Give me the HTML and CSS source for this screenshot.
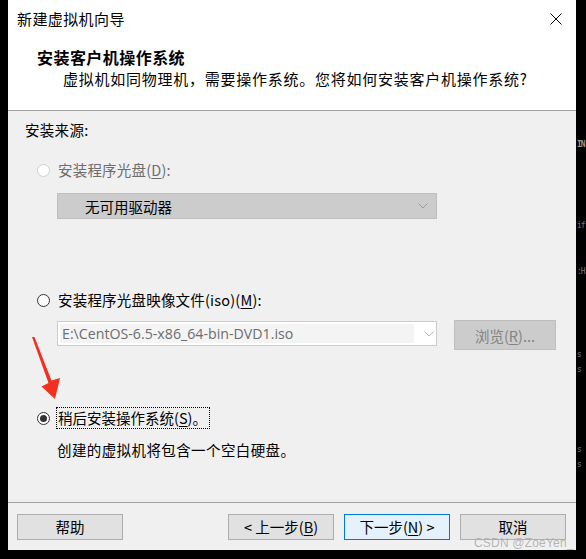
FILE: index.html
```html
<!DOCTYPE html>
<html lang="zh-CN">
<head>
<meta charset="utf-8">
<title>新建虚拟机向导</title>
<link rel="stylesheet" href="styles.css">
</head>
<body>
<div class="screen">
  <div class="dialog">
    <div class="top">
      <div class="titlebar">
        <span class="title">新建虚拟机向导</span>
        <svg class="close" width="12" height="12" viewBox="0 0 12 12"><path d="M0.5 0.5 L11.5 11.5 M11.5 0.5 L0.5 11.5" stroke="#000" stroke-width="1" fill="none"/></svg>
      </div>
      <div class="hdr-title">安装客户机操作系统</div>
      <div class="hdr-sub">虚拟机如同物理机，需要操作系统。您将如何安装客户机操作系统?</div>
    </div>
    <div class="content">
      <div class="label">安装来源:</div>
      <div class="radio-row r1 disabled">
        <span class="radio"></span>
        <span class="rtext">安装程序光盘(<u>D</u>):</span>
      </div>
      <div class="combo combo-dis">
        <span class="ctext">无可用驱动器</span>
        <svg class="chev" width="10" height="6" viewBox="0 0 10 6"><path d="M0.5 0.5 L5 5 L9.5 0.5" stroke="#9a9a9a" stroke-width="1" fill="none"/></svg>
      </div>
      <div class="radio-row r2">
        <span class="radio"></span>
        <span class="rtext">安装程序光盘映像文件(iso)(<u>M</u>):</span>
      </div>
      <div class="iso-row">
        <div class="combo combo-iso">
          <span class="field">E:\CentOS-6.5-x86_64-bin-DVD1.iso</span>
          <svg class="chev" width="10" height="6" viewBox="0 0 10 6"><path d="M0.5 0.5 L5 5 L9.5 0.5" stroke="#b4b4b4" stroke-width="1" fill="none"/></svg>
        </div>
        <div class="btn-dis">浏览(<u>R</u>)...</div>
      </div>
      <div class="radio-row r3">
        <span class="radio checked"></span>
        <span class="rtext focus">稍后安装操作系统(<u>S</u>)。</span>
      </div>
      <div class="desc">创建的虚拟机将包含一个空白硬盘。</div>
    </div>
    <div class="footer">
      <div class="btn">帮助</div>
      <div class="spacer"></div>
      <div class="btn">&lt; 上一步(<u>B</u>)</div>
      <div class="btn primary">下一步(<u>N</u>) &gt;</div>
      <div class="btn">取消</div>
    </div>
  </div>
  <svg class="arrow" width="586" height="559" viewBox="0 0 586 559"><polygon points="32,337 34.5,337 51.5,380.5 60,378 55,399 41.5,386.5 48.5,383" fill="#f2301f"/></svg>
  <div class="watermark">CSDN @ZoeYen_</div>
  <div class="behind">
    <span class="frag f1">IN</span>
    <span class="frag f2">if</span>
    <span class="frag f3">:H</span>
    <span class="frag f4">s</span>
    <span class="frag f5">s</span>
    <span class="frag f6">s</span>
    <span class="frag f7">s</span>
  </div>
</div>
</body>
</html>
```

FILE: styles.css
```css
* { box-sizing: border-box; }
html, body { margin: 0; padding: 0; background: #000; }
body {
  font-family: "Noto Sans CJK SC", "Noto Sans", sans-serif;
  font-size: 14.5px;
  color: #000;
}
u { text-decoration: underline; text-underline-offset: 2px; }
.screen {
  position: relative;
  width: 586px;
  height: 559px;
  overflow: hidden;
  background: #000;
}
.dialog {
  margin-left: 8px;
  width: 568px;
  height: 550px;
  background: #f0f0f0;
  display: flex;
  flex-direction: column;
}
.top {
  background: #fff;
  height: 111px;
  border-bottom: 1px solid #a0a0a0;
}
.titlebar {
  height: 38px;
  display: flex;
  align-items: center;
  padding-left: 9px;
  padding-right: 14px;
}
.title { flex: 1; font-size: 15px; line-height: 20px; letter-spacing: 0.4px; }
.close { display: block; }
.hdr-title {
  margin-top: 9px;
  padding-left: 29px;
  font-weight: bold;
  font-size: 16px;
  line-height: 20px;
  letter-spacing: 0.45px;
}
.hdr-sub {
  margin-top: 2px;
  padding-left: 55px;
  font-size: 15px;
  line-height: 20px;
  letter-spacing: 0.75px;
}
.content {
  flex: 1;
  display: flex;
  flex-direction: column;
}
.label {
  margin-top: 9px;
  padding-left: 17px;
  line-height: 20px;
  height: 20px;
  letter-spacing: 0.3px;
}
.radio-row {
  display: flex;
  align-items: center;
  height: 20px;
  padding-left: 29px;
  line-height: 20px;
  letter-spacing: 0.2px;
}
.r1 { margin-top: 20px; }
.r2 { margin-top: 71px; }
.r3 { margin-top: 58px; }
.radio {
  width: 13px;
  height: 13px;
  border: 1px solid #333;
  border-radius: 50%;
  background: #fff;
  margin-right: 7px;
  position: relative;
  flex: none;
}
.disabled .radio { border-color: #cfcfcf; }
.disabled .rtext { color: #6d6d6d; }
.radio.checked::after {
  content: "";
  position: absolute;
  left: 2px; top: 2px;
  width: 7px; height: 7px;
  border-radius: 50%;
  background: #333;
}
.rtext { padding: 0 1px; }
.focus {
  outline: 1px dotted #000;
  outline-offset: 0;
  padding: 0 2px 0 1px;
  letter-spacing: 0;
}
.combo {
  display: flex;
  align-items: center;
  position: relative;
}
.combo-dis {
  margin-top: 13px;
  margin-left: 49px;
  width: 380px;
  height: 26px;
  background: #cccccc;
  border: 1px solid #bfbfbf;
  padding-left: 27px;
}
.ctext { flex: 1; }
.chev { display: block; margin-right: 8px; }
.iso-row {
  display: flex;
  margin-top: 10px;
  margin-left: 49px;
  height: 30px;
}
.combo-iso {
  margin-top: 1px;
  width: 380px;
  height: 25px;
  background: #fff;
  border: 1px solid #cccccc;
  padding: 2px;
}
.field {
  width: 354px;
  height: 19px;
  background: #f4f4f4;
  color: #6d6d6d;
  font-family: "Open Sans", "Noto Sans", sans-serif;
  font-size: 14.2px;
  line-height: 19px;
  padding-left: 2px;
  white-space: nowrap;
  overflow: hidden;
  margin-right: 10px;
}
.combo-iso .chev { margin-right: 0; }
.btn-dis {
  margin-left: 17px;
  width: 102px;
  height: 30px;
  background: #cccccc;
  border: 1px solid #bfbfbf;
  color: #838383;
  display: flex;
  align-items: center;
  justify-content: center;
}
.desc {
  margin-top: 12px;
  padding-left: 49px;
  line-height: 20px;
  letter-spacing: 0.4px;
}
.footer {
  height: 48px;
  border-top: 1px solid #a0a0a0;
  padding: 11px 10px 0 9px;
  display: flex;
  align-items: flex-start;
  gap: 10px;
}
.spacer { flex: 1; }
.btn {
  width: 106px;
  height: 26px;
  background: #e1e1e1;
  border: 1px solid #adadad;
  display: flex;
  align-items: center;
  justify-content: center;
  line-height: 20px;
}
.btn.primary {
  background: #e5f1fb;
  border-color: #0078d7;
}
.arrow {
  position: absolute;
  left: 0; top: 0;
  pointer-events: none;
}
.watermark {
  position: absolute;
  left: 474px;
  top: 535px;
  font-family: "Liberation Sans", sans-serif;
  font-size: 12px;
  line-height: 16px;
  color: rgba(170,170,170,0.85);
  letter-spacing: 0.2px;
}
.behind {
  position: absolute;
  left: 577px;
  top: 0;
  width: 9px;
  height: 559px;
}
.frag {
  position: absolute;
  left: 0;
  color: #7a7a7a;
  font-family: "DejaVu Sans Mono", monospace;
  font-size: 8px;
  line-height: 12px;
  letter-spacing: -1px;
}
.f1 { top: 139px; font-weight: bold; color: #9a9a9a; }
.f2 { top: 220px; }
.f3 { top: 266px; }
.f4 { top: 349px; }
.f5 { top: 364px; }
.f6 { top: 444px; }
.f7 { top: 459px; }
```
